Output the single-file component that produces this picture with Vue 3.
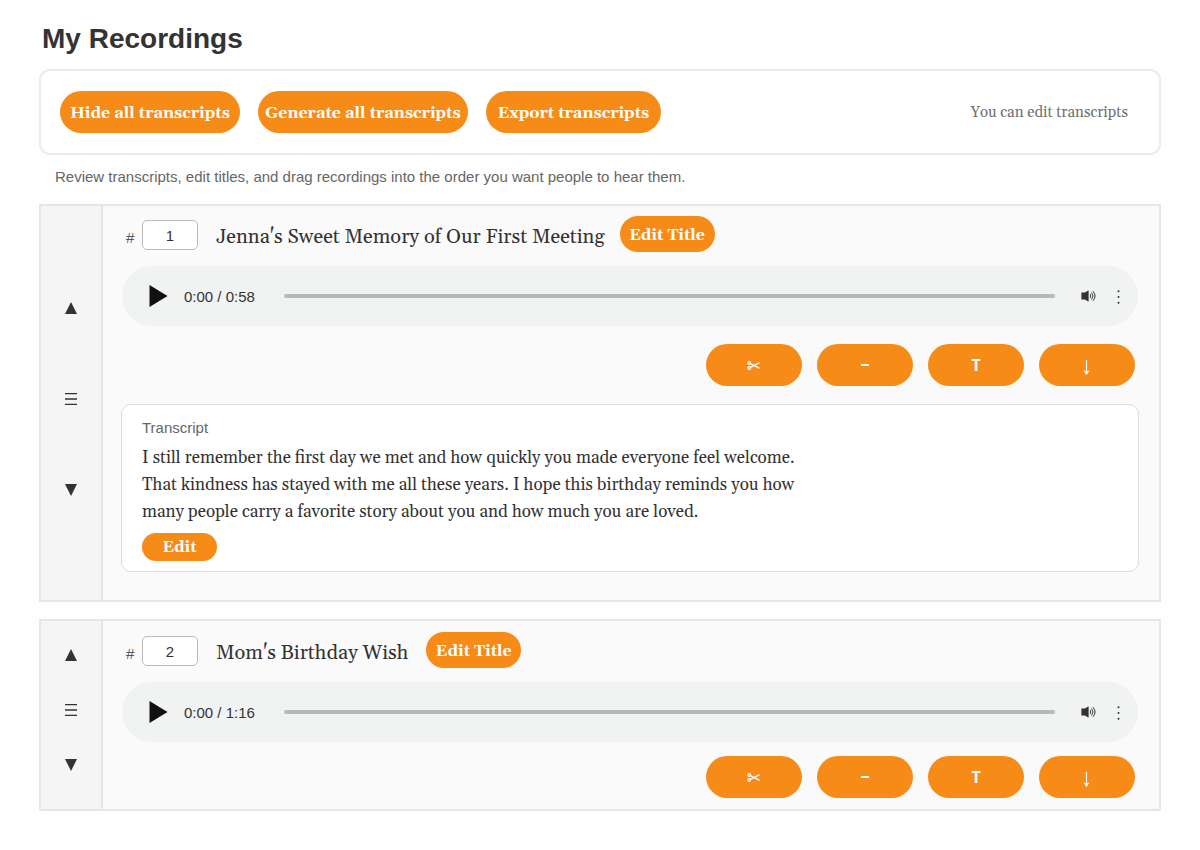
<template>
  <div class="recordings">
    <h1>My Recordings</h1>

    <div class="toolbar">
      <button class="btn btn-hide" @click="toggleAll">{{ allHidden ? 'Show' : 'Hide' }} all transcripts</button>
      <button class="btn btn-generate">Generate all transcripts</button>
      <button class="btn btn-export">Export transcripts</button>
      <span class="toolbar-note">You can edit transcripts</span>
    </div>

    <p class="hint">Review transcripts, edit titles, and drag recordings into the order you want people to hear them.</p>

    <div v-for="(r, i) in recordings" :key="r.id" class="card" :class="{ open: isOpen(r) }">
      <!-- reorder rail -->
      <div class="rail">
        <button class="rail-btn" aria-label="Move up" @click="move(i, -1)">
          <svg width="12" height="12" viewBox="0 0 12 12"><path d="M6 0L12 12H0z" fill="#333" /></svg>
        </button>
        <span class="rail-btn" aria-label="Drag">
          <svg width="12" height="12" viewBox="0 0 12 12"><path d="M0 .6h12M0 6h12M0 11.4h12" stroke="#333" stroke-width="1.3" /></svg>
        </span>
        <button class="rail-btn" aria-label="Move down" @click="move(i, 1)">
          <svg width="12" height="12" viewBox="0 0 12 12"><path d="M0 0H12L6 12z" fill="#333" /></svg>
        </button>
      </div>

      <div class="body">
        <div class="title-row">
          <span class="hash">#</span>
          <input class="order" :value="i + 1" aria-label="Position" />
          <span class="title">{{ r.title }}</span>
          <button class="btn btn-title">Edit Title</button>
        </div>

        <div class="player">
          <svg class="play" width="19" height="22" viewBox="0 0 19 22"><path d="M.5 0L18.5 11L.5 22z" fill="#111" /></svg>
          <span class="time">0:00 / {{ r.length }}</span>
          <span class="track"></span>
          <svg class="volume" width="16" height="12" viewBox="0 0 16 12">
            <path d="M.4 2.6h3.4L7.6 .3v11.4L3.8 9.4H.4z" fill="#333" />
            <path d="M9 4.2q1.4 1.8 0 3.6M10.6 2.6q2.8 3.4 0 6.8M12 1.2q4.2 4.8 0 9.6" fill="none" stroke="#333" stroke-width="1" />
          </svg>
          <svg class="more" width="3" height="14" viewBox="0 0 3 14" fill="#333">
            <circle cx="1.5" cy="1.2" r="1" /><circle cx="1.5" cy="7" r="1" /><circle cx="1.5" cy="12.8" r="1" />
          </svg>
        </div>

        <div class="actions">
          <button class="btn btn-action" aria-label="Trim">
            <svg width="14" height="9" viewBox="0 0 14 9" fill="none" stroke="#fff" stroke-width="1.2">
              <circle cx="2.2" cy="2" r="1.3" /><circle cx="2.2" cy="7" r="1.3" />
              <path d="M3.4 2.6L12.6 7.4M3.4 6.4L12.6 1.6" />
            </svg>
          </button>
          <button class="btn btn-action" aria-label="Remove">
            <svg width="8" height="2" viewBox="0 0 8 2"><path d="M0 1h8" stroke="#fff" stroke-width="2" /></svg>
          </button>
          <button class="btn btn-action letter" aria-label="Transcript" @click="toggle(r)">T</button>
          <button class="btn btn-action" aria-label="Download">
            <svg class="down" width="8" height="15" viewBox="0 0 8 15">
              <path d="M3.5 0v12" stroke="#fff" stroke-width="1.1" /><path d="M.4 10.4L3.5 11.6L6.6 10.4L3.5 15z" fill="#fff" />
            </svg>
          </button>
        </div>

        <div v-if="isOpen(r)" class="transcript">
          <div class="label">Transcript</div>
          <p><span v-for="line in r.transcript" :key="line">{{ line }}</span></p>
          <button class="btn btn-edit">Edit</button>
        </div>
      </div>
    </div>
  </div>
</template>

<script setup>
import { ref } from 'vue'

const allHidden = ref(false)
const recordings = ref([
  {
    id: 1,
    title: "Jenna's Sweet Memory of Our First Meeting",
    length: '0:58',
    open: true,
    transcript: [
      'I still remember the first day we met and how quickly you made everyone feel welcome.',
      'That kindness has stayed with me all these years. I hope this birthday reminds you how',
      'many people carry a favorite story about you and how much you are loved.'
    ]
  },
  { id: 2, title: "Mom's Birthday Wish", length: '1:16', open: false, transcript: [] }
])

function isOpen(r) {
  return r.open && !allHidden.value && r.transcript.length > 0
}

function toggle(r) {
  r.open = !r.open
}

function toggleAll() {
  allHidden.value = !allHidden.value
}

// swap a recording with its neighbour
function move(i, step) {
  const j = i + step
  if (j < 0 || j >= recordings.value.length) return
  const list = recordings.value
  ;[list[i], list[j]] = [list[j], list[i]]
}
</script>

<style>
body { background: #fefefe; }
</style>

<style scoped>
.recordings {
  box-sizing: border-box;
  width: 1200px;
  padding: 21px 39px 0;
  font-family: "Liberation Sans", Arial, sans-serif;
  color: #333;
}
.recordings * { box-sizing: border-box; }
h1 { margin: 0 0 12px 3px; font-size: 28px; line-height: 36px; }

.btn {
  flex: none;
  padding: 2px 0 0;
  border: none;
  border-radius: 999px;
  background: #f78b18;
  color: #fff;
  font-family: Georgia, Gelasio, serif;
  font-weight: 700;
  font-size: 16px;
  white-space: nowrap;
  cursor: pointer;
}

.toolbar {
  display: flex;
  align-items: center;
  gap: 18px;
  height: 86px;
  padding: 0 31px 0 19px;
  border: 2px solid #ebebeb;
  border-radius: 11px;
  background: #fff;
}
.toolbar .btn { height: 42px; }
.btn-hide { width: 180px; }
.btn-generate { width: 210px; }
.btn-export { width: 175px; }
.toolbar-note { margin-left: auto; font-family: Georgia, Gelasio, serif; font-size: 15px; color: #707070; }

.hint { margin: 12px 0 17px 16px; font-size: 15px; line-height: 20px; color: #666; }

.card {
  display: flex;
  height: 192px;
  margin-bottom: 17px;
  border: 2px solid #e6e6e6;
  background: #fafafa;
}
.card.open { height: 398px; }

.rail {
  display: flex;
  flex-direction: column;
  align-items: center;
  gap: 43px;
  width: 62px;
  padding-top: 28px;
  border-right: 2px solid #e6e6e6;
  background: #f5f5f5;
}
.open .rail { gap: 79px; padding-top: 96px; }
.rail-btn { display: flex; padding: 0; border: none; background: none; }

.body { flex: 1; padding: 11px 21px 0 19px; }
.open .body { padding-top: 10px; }
.title-row { display: flex; align-items: center; height: 36px; }
.hash { flex: none; width: 20px; padding: 7px 0 0 4px; font-size: 15px; color: #555; }
.order {
  width: 56px;
  height: 30px;
  margin-top: 2px;
  padding: 0;
  border: 1px solid #bbb;
  border-radius: 5px;
  background: #fff;
  color: #333;
  font: 15px "Liberation Sans", Arial, sans-serif;
  text-align: center;
}
.title { margin: 5px 18px 0 18px; font-family: Georgia, Gelasio, serif; font-size: 20px; }
.open .title { margin-right: 15px; }
.btn-title { width: 95px; height: 36px; }

.player {
  display: flex;
  align-items: center;
  height: 60px;
  margin-top: 14px;
  padding: 0 18px 0 28px;
  border-radius: 30px;
  background: #f1f3f3;
}
.play { margin-left: -1px; }
.time { width: 116px; padding: 1px 0 0 16px; font-size: 15px; }
.track { flex: 1; height: 4px; border-radius: 2px; background: #b8baba; }
.volume { margin: 0 20px 0 26px; }
.more { margin-top: 2px; }

.actions { display: flex; justify-content: flex-end; gap: 15px; margin-top: 14px; padding-right: 3px; }
.open .actions { margin-top: 18px; }
.btn-action { display: flex; align-items: center; justify-content: center; width: 96px; height: 42px; padding: 0; }
.letter { font-family: "Noto Sans", sans-serif; font-size: 16px; }
.down { margin-top: 5px; }

.transcript {
  height: 168px;
  margin: 18px -1px 0;
  padding: 13px 20px 0;
  border: 1px solid #ddd;
  border-radius: 10px;
  background: #fff;
}
.label { font-size: 15px; line-height: 20px; color: #666; }
.transcript p { margin: 7px 0 7px; font-family: Georgia, Gelasio, serif; font-size: 17px; line-height: 27px; }
.transcript p span { display: block; }
.btn-edit { display: block; width: 75px; height: 28px; padding-top: 0; }
</style>
